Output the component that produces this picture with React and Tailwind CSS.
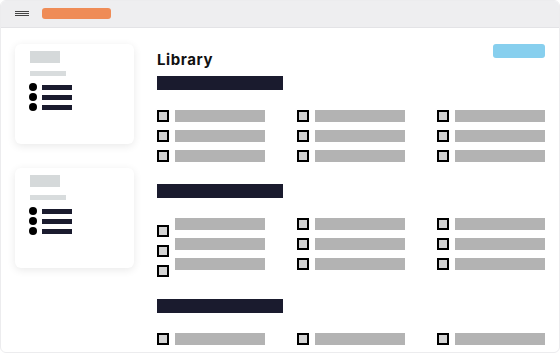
const Box = () => (
  <span className="block w-[12px] h-[12px] shrink-0 border-2 border-black bg-[#d4d4d4]" />
);

const Row = ({ shift }) => (
  <div className="flex items-start gap-[6px] h-[12px]">
    <span className={shift ? "translate-y-[7px]" : ""}>
      <Box />
    </span>
    <span className="block w-[90px] h-[12px] bg-[#b3b3b3]" />
  </div>
);

const Section = ({ rows, shiftFirst, className }) => (
  <div className={className}>
    <div className="w-[126px] h-[14px] bg-[#1a1b2e]" />
    <div className="mt-[20px] grid grid-cols-[140px_140px_1fr] gap-y-[8px]">
      {Array.from({ length: rows * 3 }).map((_, i) => (
        <Row key={i} shift={shiftFirst && i % 3 === 0} />
      ))}
    </div>
  </div>
);

const Card = () => (
  <div className="w-[119px] h-[100px] rounded-[6px] bg-white shadow-[0_2px_8px_rgba(0,0,0,0.09)] pl-[15px] pt-[7px]">
    <div className="w-[30px] h-[12px] bg-[#d5d9da]" />
    <div className="mt-[8px] w-[36px] h-[5px] bg-[#d8dcdd]" />
    <div className="mt-[7px] -ml-[1px] flex flex-col gap-[2px]">
      {[0, 1, 2].map((i) => (
        <div key={i} className="flex items-center gap-[5px] h-[8px]">
          <span className="block w-[8px] h-[8px] rounded-full bg-black" />
          <span className="block w-[30px] h-[5px] bg-[#1a1b2e]" />
        </div>
      ))}
    </div>
  </div>
);

export default function App() {
  return (
    <div className="w-[560px] h-[353px] overflow-hidden rounded-[6px] border border-[#ececee] bg-white font-['Inter','Noto_Sans',sans-serif]">
      <div className="h-[27px] bg-[#eeeef0] border-b border-[#e3e3e6] flex items-center gap-[13px] pl-[14px] pb-[1px]">
        <div className="flex flex-col gap-[1px]">
          <span className="block w-[14px] h-[1px] bg-[#444]" />
          <span className="block w-[14px] h-[1px] bg-[#444]" />
          <span className="block w-[14px] h-[1px] bg-[#444]" />
        </div>
        <div className="w-[69px] h-[11px] rounded-[3px] bg-[#ef8c57]" />
      </div>
      <div className="flex pt-[16px]">
        <div className="pl-[14px] flex flex-col gap-[24px]">
          <Card />
          <Card />
        </div>
        <div className="flex-1 ml-[23px] pr-[14px]">
          <div className="flex justify-between items-start">
            <h1 className="mt-[6px] text-[15px] leading-[20px] font-bold tracking-[0.04em] text-[#111]">
              Library
            </h1>
            <div className="w-[52px] h-[14px] rounded-[3px] bg-[#87cfee]" />
          </div>
          <Section rows={3} className="mt-[6px]" />
          <Section rows={3} shiftFirst className="mt-[22px]" />
          <Section rows={1} className="mt-[29px]" />
        </div>
      </div>
    </div>
  );
}
